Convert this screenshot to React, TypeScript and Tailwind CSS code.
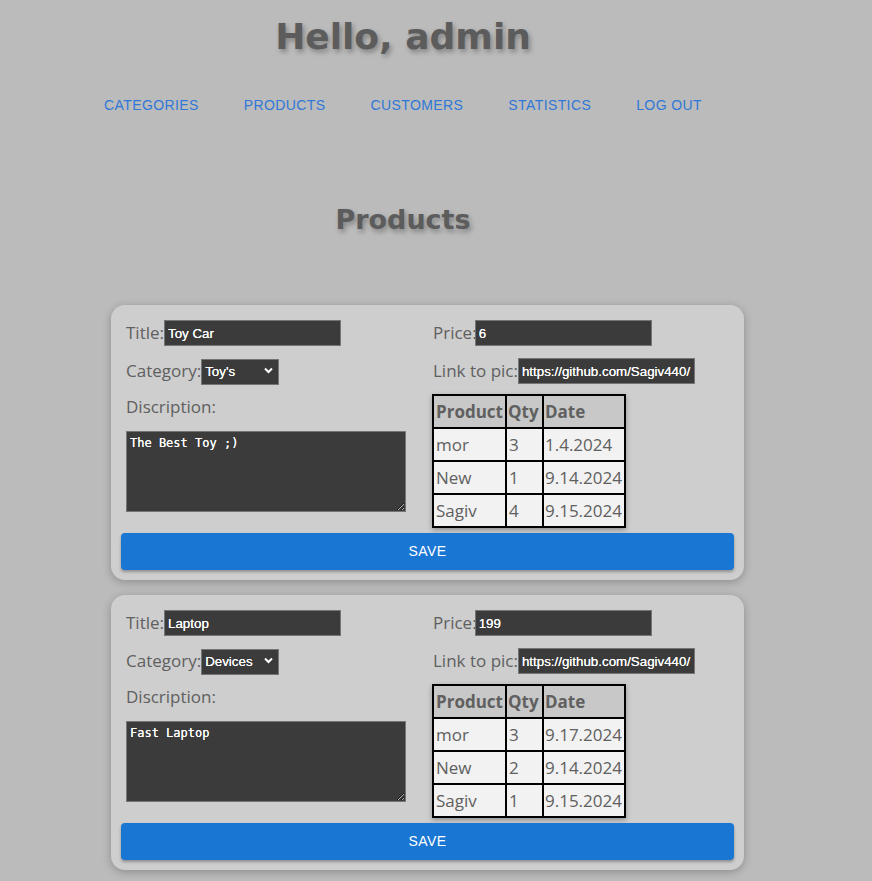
import React from "react";

type Order = { name: string; qty: number; date: string };
type Product = { title: string; price: string; category: string; desc: string; link: string; orders: Order[] };

const products: Product[] = [
  {
    title: "Toy Car",
    price: "6",
    category: "Toy's",
    desc: "The Best Toy ;)",
    link: "https://github.com/Sagiv440/",
    orders: [
      { name: "mor", qty: 3, date: "1.4.2024" },
      { name: "New", qty: 1, date: "9.14.2024" },
      { name: "Sagiv", qty: 4, date: "9.15.2024" },
    ],
  },
  {
    title: "Laptop",
    price: "199",
    category: "Devices",
    desc: "Fast Laptop",
    link: "https://github.com/Sagiv440/",
    orders: [
      { name: "mor", qty: 3, date: "9.17.2024" },
      { name: "New", qty: 2, date: "9.14.2024" },
      { name: "Sagiv", qty: 1, date: "9.15.2024" },
    ],
  },
];

const labelCls = "text-[17px] text-[#606060] font-['Open_Sans',sans-serif] leading-[24px]";
const inputCls =
  "h-[26px] bg-[#3b3b3b] border border-[#757575] text-white text-[13.333px] font-['Liberation_Sans',Arial,sans-serif] px-[3px] outline-none [text-shadow:0_0_0.4px_white]";

function Card({ p }: { p: Product }) {
  return (
    <div className="w-[633px] rounded-[14px] bg-[#cecece] shadow-[0_2px_8px_rgba(0,0,0,0.25)] p-[10px]">
      <div className="flex">
        <div className="w-[306px] pl-[5px] pt-[5px]">
          <div className="flex items-center h-[26px] mb-[12px]">
            <span className={labelCls}>Title:</span>
            <input className={inputCls + " w-[177px]"} defaultValue={p.title} />
          </div>
          <div className="flex items-center h-[26px] mb-[11px]">
            <span className={labelCls}>Category:</span>
            <div className="relative">
              <select
                className={inputCls + " w-[78px] h-[25px] appearance-none pr-[18px]"}
                defaultValue={p.category}
              >
                <option>{p.category}</option>
              </select>
              <svg
                className="absolute right-[6px] top-[9px] pointer-events-none"
                width="9"
                height="7"
                viewBox="0 0 9 7"
              >
                <path d="M1 1.5 L4.5 5 L8 1.5" stroke="white" strokeWidth="2" fill="none" />
              </svg>
            </div>
          </div>
          <div className={labelCls + " h-[24px] mb-[12px]"}>Discription:</div>
          <textarea
            className="block w-[280px] h-[81px] bg-[#3b3b3b] border border-[#757575] text-white text-[12px] font-['DejaVu_Sans_Mono',monospace] px-[3px] py-[2px] outline-none [text-shadow:0_0_0.4px_white]"
            defaultValue={p.desc}
          />
        </div>
        <div className="w-[307px] pl-[6px] pt-[5px]">
          <div className="flex items-center h-[26px] mb-[12px]">
            <span className={labelCls}>Price:</span>
            <input className={inputCls + " w-[177px] -ml-[2px]"} defaultValue={p.price} />
          </div>
          <div className="flex items-center h-[26px] mb-[10px]">
            <span className={labelCls}>Link to pic:</span>
            <input className={inputCls + " w-[177px] h-[25px]"} defaultValue={p.link} />
          </div>
          <table className="border-collapse border-2 border-black shadow-[0_2px_5px_rgba(0,0,0,0.3)] font-['Open_Sans',sans-serif] text-[17px] text-[#606060] -ml-[1px]">
            <thead>
              <tr className="bg-[#c8c8c8]">
                <th className="border-2 border-black h-[33px] px-[2px] text-left font-bold leading-[22px]">Product</th>
                <th className="border-2 border-black h-[33px] px-[1px] text-left font-bold leading-[22px] w-[37px]">Qty</th>
                <th className="border-2 border-black h-[33px] px-[1px] text-left font-bold leading-[22px] w-[82px]">Date</th>
              </tr>
            </thead>
            <tbody>
              {p.orders.map((o) => (
                <tr key={o.name} className="bg-[#f2f2f2]">
                  <td className="border-2 border-black h-[33px] px-[2px] leading-[22px]">{o.name}</td>
                  <td className="border-2 border-black h-[33px] px-[2px] leading-[22px]">{o.qty}</td>
                  <td className="border-2 border-black h-[33px] px-[1px] leading-[22px]">{o.date}</td>
                </tr>
              ))}
            </tbody>
          </table>
        </div>
      </div>
      <button className="mt-[5px] w-full h-[37px] rounded-[4px] bg-[#1976d2] text-white text-[14px] tracking-[0.4px] font-['Liberation_Sans',Arial,sans-serif] shadow-[0_2px_3px_rgba(0,0,0,0.3)]">
        SAVE
      </button>
    </div>
  );
}

export default function App() {
  return (
    <div className="min-h-[881px] w-[872px] bg-[#bbbbbb] overflow-hidden">
      <div className="w-[806px] flex flex-col items-center">
        <h1 className="mt-[16px] text-[36px] leading-[42px] font-bold text-[#5c5c5c] font-['DejaVu_Sans',Verdana,sans-serif] [text-shadow:2px_3px_5px_rgba(0,0,0,0.3)]">
          Hello, admin
        </h1>
        <nav className="mt-[37px] flex gap-[45px] text-[14px] leading-[20px] tracking-[0.4px] text-[#2f78d8] font-['Liberation_Sans',Arial,sans-serif]">
          <span>CATEGORIES</span>
          <span>PRODUCTS</span>
          <span>CUSTOMERS</span>
          <span>STATISTICS</span>
          <span>LOG OUT</span>
        </nav>
        <h2 className="mt-[89px] text-[27px] leading-[32px] font-bold text-[#5c5c5c] font-['DejaVu_Sans',Verdana,sans-serif] [text-shadow:2px_3px_5px_rgba(0,0,0,0.3)]">
          Products
        </h2>
      </div>
      <div className="ml-[111px] mt-[69px] flex flex-col gap-[15px]">
        {products.map((p) => (
          <Card key={p.title} p={p} />
        ))}
      </div>
    </div>
  );
}
